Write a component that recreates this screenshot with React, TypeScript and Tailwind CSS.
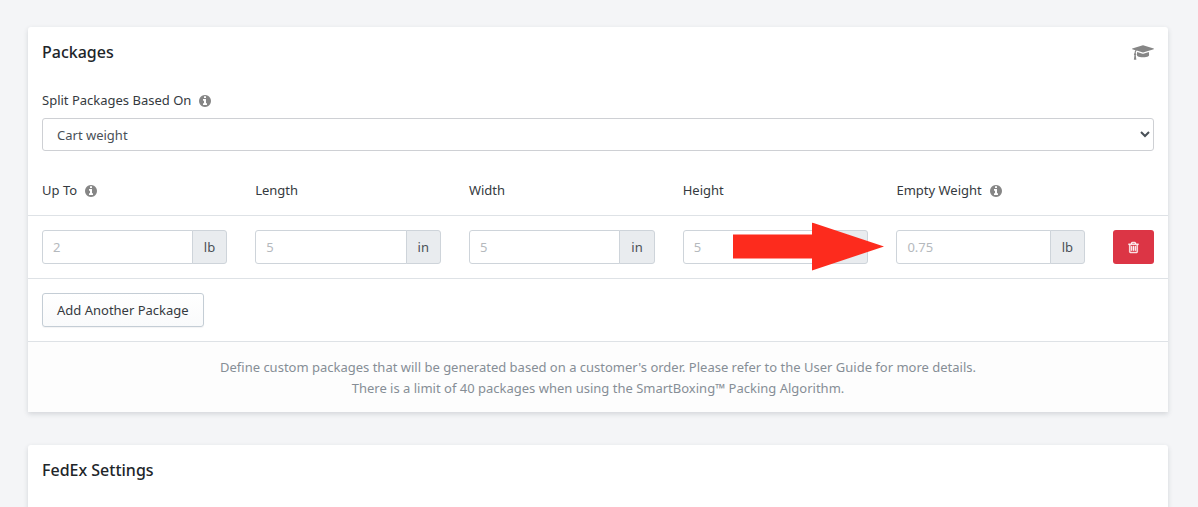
import { ReactNode } from "react";

const INFO_PATH =
  "M1152 1376v-160q0-14-9-23t-23-9h-96v-512q0-14-9-23t-23-9h-320q-14 0-23 9t-9 23v160q0 14 9 23t23 9h96v320h-96q-14 0-23 9t-9 23v160q0 14 9 23t23 9h448q14 0 23-9t9-23zm-128-896v-160q0-14-9-23t-23-9h-192q-14 0-23 9t-9 23v160q0 14 9 23t23 9h192q14 0 23-9t9-23zm640 416q0 209-103 385.5t-279.5 279.5-385.5 103-385.5-103-279.5-279.5-103-385.5 103-385.5 279.5-279.5 385.5-103 385.5 103 279.5 279.5 103 385.5z";

const CAP_PATH =
  "M1774 836l18 316q4 69-82 128t-235 93.500-323 34.500-323-34.500-235-93.500-82-128l18-316 574 181q22 7 48 7t48-7zm530-324q0 23-22 31l-1120 352q-4 1-10 1t-10-1l-652-206q-43 34-71 111.500t-34 178.500q63 36 63 109 0 69-58 107l58 433q2 14-8 25-9 11-24 11h-192q-15 0-24-11-10-11-8-25l58-433q-58-38-58-107 0-73 65-111 11-207 98-330l-333-104q-22-8-22-31t22-31l1120-352q4-1 10-1t10 1l1120 352q22 8 22 31z";

const TRASH_PATH =
  "M704 736v576q0 14-9 23t-23 9h-64q-14 0-23-9t-9-23v-576q0-14 9-23t23-9h64q14 0 23 9t9 23zm256 0v576q0 14-9 23t-23 9h-64q-14 0-23-9t-9-23v-576q0-14 9-23t23-9h64q14 0 23 9t9 23zm256 0v576q0 14-9 23t-23 9h-64q-14 0-23-9t-9-23v-576q0-14 9-23t23-9h64q14 0 23 9t9 23zm128 724v-948h-896v948q0 22 7 40.5t14.5 27 10.5 8.5h832q3 0 10.5-8.5t14.5-27 7-40.5zm-672-1076h448l-48-117q-7-9-17-11h-317q-10 2-17 11zm928 32v64q0 14-9 23t-23 9h-96v948q0 83-47 143.5t-113 60.5h-832q-66 0-113-58.5t-47-141.5v-952h-96q-14 0-23-9t-9-23v-64q0-14 9-23t23-9h309l70-167q15-37 54-63t79-26h320q40 0 79 26t54 63l70 167h309q14 0 23 9t9 23z";

function InfoIcon() {
  return (
    <svg viewBox="0 0 1792 1792" className="size-[14px] fill-[#868686]" aria-hidden="true">
      <path d={INFO_PATH} />
    </svg>
  );
}

type Field = { id: string; label: string; value: string; unit: string; info?: boolean };

const fields: Field[] = [
  { id: "up-to", label: "Up To", value: "2", unit: "lb", info: true },
  { id: "length", label: "Length", value: "5", unit: "in" },
  { id: "width", label: "Width", value: "5", unit: "in" },
  { id: "height", label: "Height", value: "5", unit: "in" },
  { id: "empty-weight", label: "Empty Weight", value: "0.75", unit: "lb", info: true },
];

function Arrow() {
  return (
    <svg
      viewBox="0 0 151 49"
      className="pointer-events-none absolute top-1/2 right-full mr-3 h-[49px] w-[151px] -translate-y-1/2"
      aria-hidden="true"
    >
      <path d="M0 12H79V0L151 24L79 48V36H0Z" fill="#fd2b1d" />
    </svg>
  );
}

function UnitInput({ field, children }: { field: Field; children?: ReactNode }) {
  return (
    <div className="relative flex h-[34px]">
      <input
        id={field.id}
        type="text"
        placeholder={field.value}
        className="min-w-0 flex-1 rounded-l-[3px] border border-[#ced4da] bg-white px-[10px] text-[#495057] outline-none placeholder:text-[#b5b9bd]"
      />
      <span className="-ml-px flex items-center rounded-r-[3px] border border-[#ced4da] bg-[#e9ecef] px-[11px] text-[#495057]">
        {field.unit}
      </span>
      {children}
    </div>
  );
}

function Card({ children }: { children: ReactNode }) {
  return (
    <section className="rounded-t-[3px] bg-white shadow-[0_2px_5px_rgba(40,50,60,0.16)]">{children}</section>
  );
}

export default function App() {
  return (
    <main className="h-screen overflow-hidden bg-[#f4f5f7] pt-[27px] pr-[30px] pl-[28px] font-['Noto_Sans','Open_Sans',sans-serif] text-[13px] leading-[21px] text-[#353a40]">
      <div className="flex flex-col gap-[33px]">
        <Card>
          <header className="flex items-center justify-between px-[14px] pt-[13px]">
            <h2 className="text-[16px] leading-[24px] font-medium text-[#212529]">Packages</h2>
            <a href="#guide" aria-label="User Guide">
              <svg viewBox="0 0 2304 1792" className="h-[17px] w-[22px] fill-[#868686]" aria-hidden="true">
                <path d={CAP_PATH} />
              </svg>
            </a>
          </header>

          <div className="px-[14px] pt-[26px]">
            <label htmlFor="split" className="flex items-center gap-[7px]">
              Split Packages Based On
              <InfoIcon />
            </label>
            <select
              id="split"
              className="mt-[7px] block h-[33px] w-full rounded-[3px] border border-[#ced0d4] bg-white pl-[10px] text-[#495057]"
            >
              <option>Cart weight</option>
            </select>
          </div>

          <table className="mt-[14px] w-full table-fixed">
            <colgroup>
              <col className="w-[18.7%]" />
              <col className="w-[18.75%]" />
              <col className="w-[18.75%]" />
              <col className="w-[18.75%]" />
              <col />
              <col className="w-[69px]" />
            </colgroup>
            <thead>
              <tr className="border-b border-[#dee2e6]">
                {fields.map((field) => (
                  <th key={field.id} scope="col" className="px-[14px] pt-[15px] pb-[14px] text-left font-normal">
                    <label htmlFor={field.id} className="flex items-center gap-[7px]">
                      {field.label}
                      {field.info && <InfoIcon />}
                    </label>
                  </th>
                ))}
                <td />
              </tr>
            </thead>
            <tbody>
              <tr className="border-b border-[#dee2e6]">
                {fields.map((field) => (
                  <td key={field.id} className="px-[14px] py-[14px]">
                    <UnitInput field={field}>{field.id === "empty-weight" && <Arrow />}</UnitInput>
                  </td>
                ))}
                <td className="px-[14px] py-[14px]">
                  <button
                    type="button"
                    aria-label="Delete package"
                    className="flex h-[34px] w-full items-center justify-center rounded-[3px] bg-[#dc3545]"
                  >
                    <svg
                      viewBox="0 0 1792 1792"
                      className="size-[13px] fill-white stroke-white [stroke-width:50]"
                      aria-hidden="true"
                    >
                      <path d={TRASH_PATH} />
                    </svg>
                  </button>
                </td>
              </tr>
            </tbody>
          </table>

          <div className="border-b border-[#dee2e6] p-[14px]">
            <button
              type="button"
              className="h-[34px] rounded-[3px] border border-[#c4cdd5] bg-linear-to-b from-white to-[#f9fafb] px-[14px] shadow-[0_1px_1px_rgba(22,29,37,0.05)]"
            >
              Add Another Package
            </button>
          </div>

          <footer className="bg-[#fdfdfd] pt-[15px] pb-[13px] text-center text-[#868e96]">
            <p>
              Define custom packages that will be generated based on a customer's order. Please refer to the User
              Guide for more details.
            </p>
            <p>There is a limit of 40 packages when using the SmartBoxing™ Packing Algorithm.</p>
          </footer>
        </Card>

        <Card>
          <header className="px-[14px] pt-[13px] pb-[40px]">
            <h2 className="text-[16px] leading-[24px] font-medium text-[#212529]">FedEx Settings</h2>
          </header>
        </Card>
      </div>
    </main>
  );
}
